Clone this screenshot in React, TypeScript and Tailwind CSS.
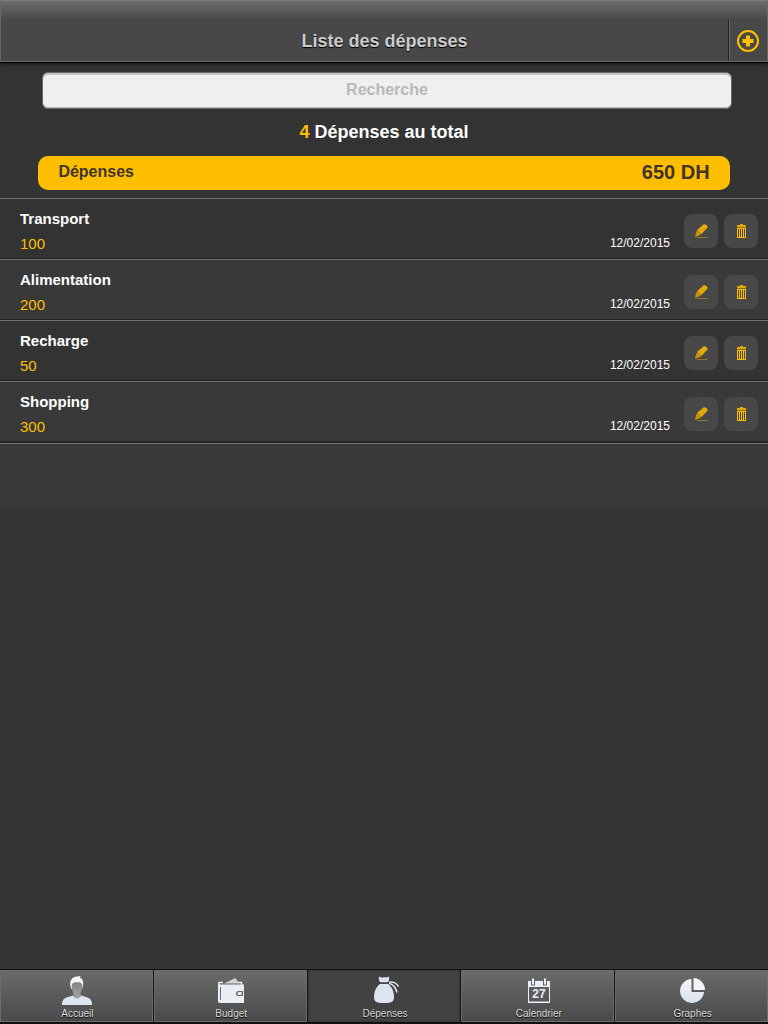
import { useState } from "react";
import type { ReactNode } from "react";

type Expense = {
  id: number;
  name: string;
  amount: number;
  date: string;
};

const expenses: Expense[] = [
  { id: 1, name: "Transport", amount: 100, date: "12/02/2015" },
  { id: 2, name: "Alimentation", amount: 200, date: "12/02/2015" },
  { id: 3, name: "Recharge", amount: 50, date: "12/02/2015" },
  { id: 4, name: "Shopping", amount: 300, date: "12/02/2015" },
];

const AddIcon = () => (
  <svg width="24" height="24" viewBox="0 0 24 24" aria-hidden="true">
    <circle cx="12" cy="12" r="10" fill="none" stroke="#ffbf00" strokeWidth="2" />
    <path d="M10 6.5h4V10h3.5v4H14v3.5h-4V14H6.5v-4H10z" fill="#ffbf00" />
  </svg>
);

const EditIcon = () => (
  <svg width="14" height="14" viewBox="0 0 14 14" aria-hidden="true">
    <path d="M9.8 0.2Q13.6 0.6 13.6 3.4L7.4 10L3.2 6z" fill="#efb207" />
    <path d="M10.4 1.4L5 7M11.9 2.8L6.4 8.4" stroke="#b5860c" strokeWidth="0.6" />
    <path d="M3.2 6L7.4 10L5.4 11.2L1 13L1.8 9z" fill="#c4920d" />
    <path d="M3 13.5h10.5" stroke="#9a7718" strokeWidth="1" />
  </svg>
);

const TrashIcon = () => (
  <svg
    width="10"
    height="14"
    viewBox="0 0 10 14"
    shapeRendering="crispEdges"
    aria-hidden="true"
  >
    <path d="M4 0h3v1h3v2H1V1h3z" fill="#e0a908" />
    <path d="M1 3h9v1H1z" fill="#8a6b1a" />
    <path
      d="M1 4h9v1H1zM1 13h9v1H1zM1 5h1v8H1zM3 5h1v8H3zM5 5h1v8H5zM7 5h1v8H7zM9 5h1v8H9z"
      fill="#ffbf00"
    />
  </svg>
);

const UserIcon = () => (
  <svg width="30" height="30" viewBox="0 0 30 30" aria-hidden="true">
    <defs>
      <linearGradient id="face" x1="0" y1="0" x2="0" y2="1">
        <stop offset="0" stopColor="#858585" />
        <stop offset="1" stopColor="#a2a2a2" />
      </linearGradient>
    </defs>
    <path
      d="M0 29C0 24 2 22 6 21L11 19.5C13 22 17 22 19 19.5L24 21C28 22 30 24 30 29z"
      fill="#dde5f0"
    />
    <path
      d="M9.5 13C7.5 9 7.5 4 11.5 1.5C13.5 0 16.5 0.5 18.5 0C18.2 0.8 18 1.2 17.8 1.6C22 3 21.8 9 20 13z"
      fill="#f4f5f7"
    />
    <path
      d="M9.8 8.5C11 6.5 12 6 15 6.2C18 6 19 6.5 20.2 8.5C20.6 12 19.8 15.5 18.6 17V20.5C17 23 13 23 11.4 20.5V17C10.2 15.5 9.4 12 9.8 8.5z"
      fill="url(#face)"
    />
  </svg>
);

const WalletIcon = () => (
  <svg width="28" height="30" viewBox="0 0 28 30" aria-hidden="true">
    <path d="M7 7.5L18.5 2L22 7.5z" fill="#d3d3d3" />
    <path d="M2 11V6.5H6M21 6.5h3.5V9" fill="none" stroke="#f2f2f2" strokeWidth="1.4" />
    <path d="M1 6.5C1 8 2 8.5 4 8.5H27V27H3Q1 27 1 25z" fill="#e9edf4" />
    <path d="M3.5 11v13" stroke="#6b6b6b" strokeWidth="1" />
    <path d="M26 15h-4.5a2.5 2.5 0 0 0 0 5H26z" fill="#6a6a6a" />
    <path d="M22 16h2.5v3H22a1.5 1.5 0 0 1 0-3z" fill="#e9edf4" />
  </svg>
);

const BagIcon = () => (
  <svg width="30" height="30" viewBox="0 0 30 30" aria-hidden="true">
    <path
      d="M9 0.5C10.5 2 12 1.5 14 1.2C16 1.5 17.5 1.5 19 0.5C19.5 3 19 4.5 17.8 6.2H10.2C9 4.5 8.4 3 9 0.5z"
      fill="#dde4ef"
    />
    <path
      d="M10 8H18C22 10.5 24 16 24 21C24 25.5 22 27 14 27C6 27 4 25.5 4 21C4 16 6 10.5 10 8z"
      fill="#dde4ef"
    />
    <path
      d="M19 6.2C22.5 5.4 26.5 7 28.5 10.5M19 7.2C22.5 8 25.5 11 27 16.5"
      fill="none"
      stroke="#dde4ef"
      strokeWidth="1.6"
    />
  </svg>
);

const CalendarIcon = () => (
  <svg width="24" height="30" viewBox="0 0 24 30" aria-hidden="true">
    <path
      fillRule="evenodd"
      d="M1 5H4V9.5H8V5H16V9.5H20V5H23V27H1zM2 11V25.5H22V11z"
      fill="#eaf0f7"
    />
    <path d="M8 5H16V10H8z" fill="#eaf0f7" />
    <path d="M5 2.5H7V8.5H5zM17 2.5H19V8.5H17z" fill="#f2f2f2" />
    <text
      x="12"
      y="22"
      textAnchor="middle"
      fontFamily="Liberation Sans, sans-serif"
      fontSize="12"
      fontWeight="bold"
      fill="#eaf0f7"
    >
      27
    </text>
  </svg>
);

const ChartIcon = () => (
  <svg width="28" height="30" viewBox="0 0 28 30" aria-hidden="true">
    <defs>
      <linearGradient id="pie" x1="0" y1="0" x2="0" y2="1">
        <stop offset="0" stopColor="#f6f6f6" />
        <stop offset="1" stopColor="#d9e2ef" />
      </linearGradient>
    </defs>
    <path d="M12.5 3A12 12 0 1 0 25 16H12.5z" fill="url(#pie)" />
    <path d="M14.5 2A12 12 0 0 1 26 14H14.5z" fill="#f2f5fa" />
  </svg>
);

const tabs: { label: string; icon: ReactNode }[] = [
  { label: "Accueil", icon: <UserIcon /> },
  { label: "Budget", icon: <WalletIcon /> },
  { label: "Dépenses", icon: <BagIcon /> },
  { label: "Calendrier", icon: <CalendarIcon /> },
  { label: "Graphes", icon: <ChartIcon /> },
];

const Header = () => (
  <header className="relative z-10 border-b border-black shadow-[0_1px_3px_#111]">
    <div className="border border-[#666] border-t-[#808080] bg-[#484848]">
      <div className="h-[18px] bg-linear-to-b from-[#6c6c6c] to-[#4a4a4a]" />
      <div className="flex h-[42px]">
        <h1 className="flex-1 pl-10 text-center text-[18px] leading-[44px] font-bold text-[#ccc] [text-shadow:0_1px_1px_#000]">
          Liste des dépenses
        </h1>
        <button
          type="button"
          aria-label="Ajouter une dépense"
          className="flex w-[39px] items-center justify-center border-l border-[#222] pt-[2px] shadow-[inset_1px_0_#666]"
        >
          <AddIcon />
        </button>
      </div>
    </div>
  </header>
);

const ExpenseRow = ({ expense }: { expense: Expense }) => (
  <li className="flex h-[61px] items-start border-t border-b border-t-[#707070] border-b-[#222] pr-[10px] pl-5 even:bg-[#393939]">
    <div className="flex-1 pt-[7px]">
      <h2 className="text-[15px] leading-[25px] font-bold text-white">
        {expense.name}
      </h2>
      <p className="text-[15px] leading-[25px] text-[#ffbf00]">{expense.amount}</p>
    </div>
    <time className="mt-[34px] mr-[14px] text-[12px] leading-5 text-white">
      {expense.date}
    </time>
    <div className="mt-[15px] flex gap-[6px]">
      <button
        type="button"
        aria-label={`Modifier ${expense.name}`}
        className="flex size-[34px] items-center justify-center rounded-lg bg-[#484848]"
      >
        <EditIcon />
      </button>
      <button
        type="button"
        aria-label={`Supprimer ${expense.name}`}
        className="flex size-[34px] items-center justify-center rounded-lg bg-[#484848]"
      >
        <TrashIcon />
      </button>
    </div>
  </li>
);

const TabBar = ({ active }: { active: string }) => (
  <nav className="flex border-t border-b-2 border-[#111]">
    {tabs.map(({ label, icon }) => (
      <a
        key={label}
        href="#"
        aria-current={label === active ? "page" : undefined}
        className="flex h-[52px] flex-1 flex-col items-center border-l border-[#111] bg-linear-to-b from-[#6b6b6b] to-[#4a4a4a] pt-[6px] pl-[2px] shadow-[inset_0_0_0_1px_#6c6c6c] first:border-l-0 aria-[current=page]:from-[#424242] aria-[current=page]:to-[#424242] aria-[current=page]:shadow-[inset_0_0_2px_#222]"
      >
        {icon}
        <span className="text-[10px] leading-4 text-[#ddd] [text-shadow:0_1px_1px_#000]">
          {label}
        </span>
      </a>
    ))}
  </nav>
);

const App = () => {
  const [search, setSearch] = useState("");

  const total = expenses.reduce((sum, item) => sum + item.amount, 0);
  const visible = expenses.filter((item) =>
    item.name.toLowerCase().includes(search.toLowerCase()),
  );

  return (
    <div className="flex min-h-screen flex-col bg-[#333] font-['Liberation_Sans',Arial,sans-serif]">
      <Header />

      <main className="flex-1 pt-[9px]">
        <div className="pr-9 pl-[42px]">
          <input
            type="text"
            aria-label="Recherche"
            placeholder="Recherche"
            value={search}
            onChange={(e) => setSearch(e.target.value)}
            className="block h-[37px] w-full rounded-md border border-[#666] bg-[#efefef] pb-[2px] text-center text-[16px] font-bold text-[#333] shadow-[inset_0_2px_#c4c4c4,inset_0_-1px_#bbb] outline-none placeholder:text-[#b9b9b9]"
          />
        </div>

        <p className="mt-[11px] text-center text-[18px] leading-6 font-bold text-white">
          <span className="text-[#ffbf00]">{expenses.length}</span> Dépenses au total
        </p>

        <div className="mx-[5%] mt-3 flex h-[34px] justify-between rounded-[10px] bg-[#ffbf00] px-5 leading-8 font-bold text-[#42342a]">
          <span className="text-[16px]">Dépenses</span>
          <span className="text-[20px]">{total} DH</span>
        </div>

        <ul className="mt-2 border-b border-[#222]">
          {visible.map((expense) => (
            <ExpenseRow key={expense.id} expense={expense} />
          ))}
        </ul>
        <div className="h-[66px] border-t border-[#707070] bg-[#393939]" />
      </main>

      <TabBar active="Dépenses" />
    </div>
  );
};

export default App;
